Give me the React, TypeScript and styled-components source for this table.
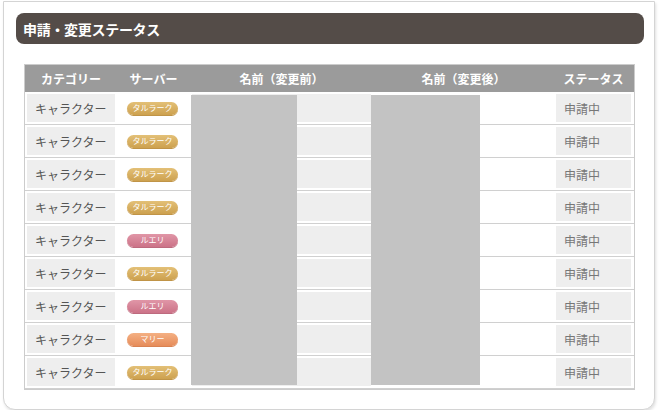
import React from "react";
import styled, { createGlobalStyle, css } from "styled-components";

const Global = createGlobalStyle`
  html, body { margin: 0; padding: 0; background: #fff; }
  body { font-family: "Noto Sans CJK JP", "Noto Sans", sans-serif; }
`;

const Page = styled.div`
  padding: 1px 0 0 3px;
  width: 652px;
`;

const Card = styled.div`
  background: #fff;
  border: 1px solid #d4d4d4;
  border-radius: 0 0 12px 12px;
  box-shadow: 1px 2px 3px rgba(0, 0, 0, 0.12);
  padding: 11px 10px 20px 12px;
  height: 376px;
`;

const TitleBar = styled.div`
  height: 31px;
  background: #544c48;
  border-radius: 8px;
  display: flex;
  align-items: center;
  padding-left: 7px;
  color: #fff;
  font-size: 14px;
  font-weight: bold;
  letter-spacing: -0.3px;
`;

const Table = styled.div`
  position: relative;
  margin: 20px 9px 0 8px;
  border: 1px solid #cccccc;
`;

const COLS = "92px 73px 183px 181px 79px";

const HeaderRow = styled.div`
  display: grid;
  grid-template-columns: ${COLS};
  height: 27px;
  background: #9b9b9b;
  align-items: center;
`;

const HeaderCell = styled.div`
  color: #fff;
  font-weight: bold;
  font-size: 12px;
  text-align: center;
`;

const Row = styled.div`
  display: grid;
  grid-template-columns: ${COLS};
  height: 32px;
  padding: 2px 0;
  box-sizing: border-box;
  height: 33px;
  border-bottom: 1px solid #d0d0d0;
  &:last-child { border-bottom: none; height: 32px; }
`;

const Cell = styled.div<{ $shade?: boolean; $tone?: "dark" | "light" }>`
  margin: 0 2px;
  display: flex;
  align-items: center;
  font-size: 12px;
  padding-left: 8px;
  color: ${(p) => (p.$tone === "light" ? "#777" : "#555")};
  ${(p) =>
    p.$shade &&
    css`
      background: #eeeeee;
    `}
`;

const ServerCell = styled.div`
  display: flex;
  align-items: center;
  justify-content: center;
  padding-right: 2px;
`;

const badgeColors = {
  gold: ["#e3c077", "#cda14f", "#c09447"],
  pink: ["#e096a7", "#cc7388", "#bd6a7e"],
  orange: ["#f4b083", "#e68c5a", "#d98252"],
};

const Badge = styled.span<{ $kind: keyof typeof badgeColors }>`
  width: 51px;
  height: 13px;
  border-radius: 7px;
  box-sizing: border-box;
  display: flex;
  align-items: center;
  justify-content: center;
  color: #fff;
  font-size: 8px;
  line-height: 1;
  background: linear-gradient(
    ${(p) => badgeColors[p.$kind][0]},
    ${(p) => badgeColors[p.$kind][1]}
  );
  box-shadow: 0 1px 0 ${(p) => badgeColors[p.$kind][2]};
`;

const Redact = styled.div`
  position: absolute;
  top: 30px;
  height: 290px;
  background: #c3c3c3;
`;

type Server = "タルラーク" | "ルエリ" | "マリー";
const kindOf: Record<Server, keyof typeof badgeColors> = {
  タルラーク: "gold",
  ルエリ: "pink",
  マリー: "orange",
};

const rows: Server[] = [
  "タルラーク",
  "タルラーク",
  "タルラーク",
  "タルラーク",
  "ルエリ",
  "タルラーク",
  "ルエリ",
  "マリー",
  "タルラーク",
];

export default function App() {
  return (
    <>
      <Global />
      <Page>
        <Card>
          <TitleBar>申請・変更ステータス</TitleBar>
          <Table>
            <HeaderRow>
              <HeaderCell>カテゴリー</HeaderCell>
              <HeaderCell>サーバー</HeaderCell>
              <HeaderCell>名前（変更前）</HeaderCell>
              <HeaderCell>名前（変更後）</HeaderCell>
              <HeaderCell>ステータス</HeaderCell>
            </HeaderRow>
            {rows.map((s, i) => (
              <Row key={i}>
                <Cell $shade>キャラクター</Cell>
                <ServerCell>
                  <Badge $kind={kindOf[s]}>{s}</Badge>
                </ServerCell>
                <Cell $shade />
                <Cell />
                <Cell $shade $tone="light">申請中</Cell>
              </Row>
            ))}
            <Redact style={{ left: 166, width: 106 }} />
            <Redact style={{ left: 346, width: 109 }} />
          </Table>
        </Card>
      </Page>
    </>
  );
}
